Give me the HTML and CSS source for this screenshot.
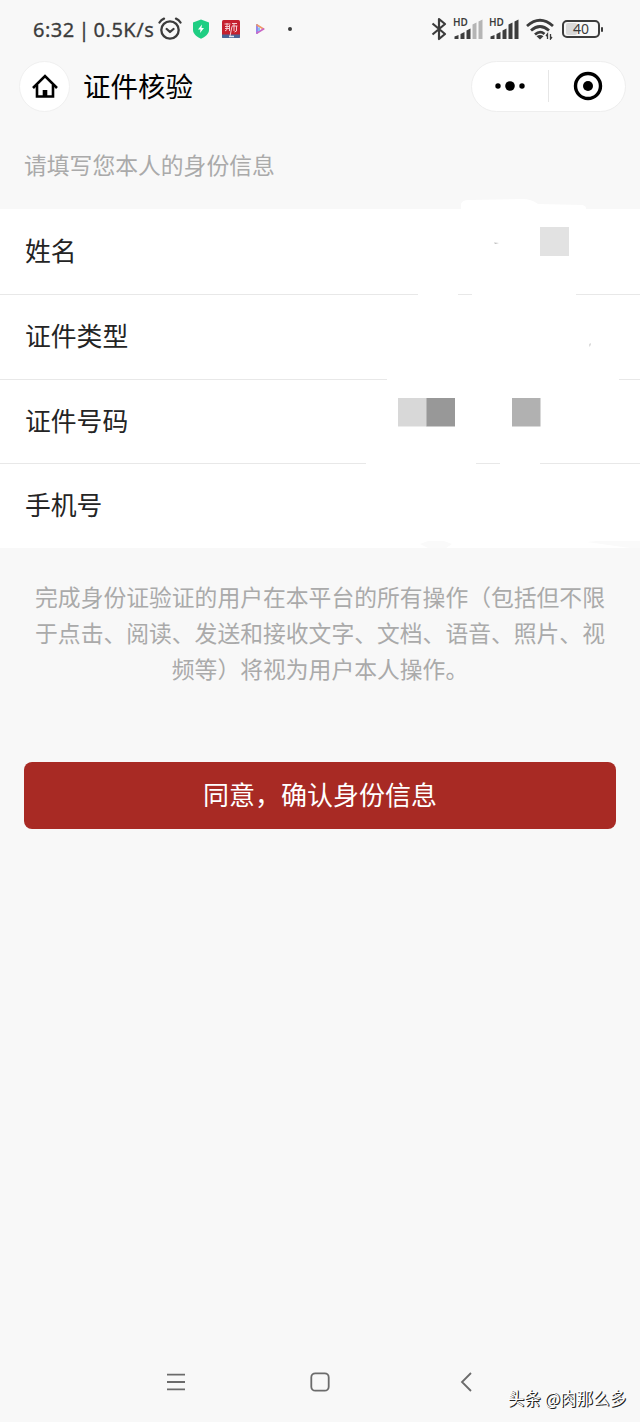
FILE: index.html
```html
<!DOCTYPE html>
<html lang="zh-CN">
<head>
    <meta charset="UTF-8">
    <meta name="viewport" content="width=device-width, initial-scale=1.0">
    <title>证件核验</title>
    <link rel="stylesheet" href="styles.css">
</head>
<body>
    <div class="page">
        <div class="status-bar">
            <span class="status-time">6:32 | 0.5K/s</span>
            <svg class="icon-alarm" viewBox="0 0 24 24" width="24" height="24" fill="none" stroke="#3c3c3c" stroke-width="2.3" stroke-linecap="round" stroke-linejoin="round">
                <circle cx="12" cy="13" r="8.7"/>
                <path d="M8.7 12l3.3 3 3.5-3M1.5 5.5Q3.2 2.7 6 1.7M22.5 5.5Q20.8 2.7 18 1.7"/>
            </svg>
            <svg class="icon-shield" viewBox="0 0 18 20" width="18" height="20">
                <path d="M9 .5L17 3.5V11c0 4-4 7-8 8.700C5 18 1 15 1 11V3.500z" fill="#1fce83"/>
                <path d="M10 5.500L6 10.500h2.500L8 14l4-5H9.500z" fill="#fff"/>
            </svg>
            <svg class="icon-app" viewBox="0 0 18 18" width="18" height="18">
                <rect width="18" height="18" rx="1.500" fill="#c5202e"/>
                <path d="M0 14.500h18V17q0 1-1 1H1q-1 0-1-1z" fill="#4a6495"/>
                <path d="M2.500 4h6M10 3.500h5M3 6.500h5M5 3v6.500L3 11M7.500 5v6M10 6h5.500M12 3v8M14.500 6v5l-2 1M3 8.500h5M8 16.300l2-10" fill="none" stroke="#f5cbd0" stroke-width="1"/>
                <path d="M7 16.500h5" stroke="#dce2ed" stroke-width="1.500"/>
            </svg>
            <svg class="icon-play" viewBox="0 0 12 12" width="12" height="12" fill="none" stroke-width="1.800" stroke-linecap="round">
                <path d="M3 2v8" stroke="#8a7bea"/>
                <path d="M3 2l6.500 4" stroke="#f09a68"/>
                <path d="M3 10l6.500-4" stroke="#c968c6"/>
                <path d="M5 5v2.500" stroke="#63b2f2" stroke-width="1.500"/>
            </svg>
            <span class="status-dot"></span>
            <div class="status-right">
                <svg class="icon-bluetooth" viewBox="0 0 16 24" width="16" height="24" fill="none" stroke="#3c3c3c" stroke-width="2.200" stroke-linejoin="round">
                    <path d="M1.500 6.500L14 17 8 22V2l6 5L1.500 17.500"/>
                </svg>
                <svg class="icon-signal" viewBox="0 0 30 22" width="30" height="22">
                    <text x="0" y="8" class="signal-hd">HD</text>
                    <path d="M1.500 21v-2.500l4-1.500v4zM7.500 21v-5l4-2v7zM13.500 21v-8.500l4-2V21z" fill="#3c3c3c"/>
                    <path d="M19.500 21V6.500l4-2V21zM25.500 21V3.500l4-2V21z" fill="#b5b5b5"/>
                </svg>
                <svg class="icon-signal" viewBox="0 0 30 22" width="30" height="22">
                    <text x="0" y="8" class="signal-hd">HD</text>
                    <path d="M1.500 21v-2.500l4-1.500v4zM7.500 21v-5l4-2v7zM13.500 21v-8.500l4-2V21zM19.500 21V6.500l4-2V21zM25.500 21V3.500l4-2V21z" fill="#3c3c3c"/>
                </svg>
                <svg class="icon-wifi" viewBox="0 0 28 22" width="28" height="22" fill="none" stroke="#3c3c3c" stroke-width="2.800">
                    <path d="M1 8Q14-3.500 27 8M5 12.500Q14 4.500 23 12.500M9 16.500Q14 12 18.500 16"/>
                    <path d="M10.500 18.300q3.500-2.500 7 0L14 21.500z" fill="#3c3c3c" stroke="none"/>
                    <path d="M21.500 21v-5l-1.500 2M24.500 16v5l1.500-2" stroke-width="1.300"/>
                </svg>
                <div class="battery"><span class="battery-level"></span><span class="battery-text">40</span></div>
                <span class="battery-tip"></span>
            </div>
        </div>

        <div class="nav-bar">
            <div class="home-button">
                <svg viewBox="0 0 26 24" width="26" height="24" fill="none" stroke="#000" stroke-width="2.600">
                    <path d="M1 14L13 2l12 12" stroke-linejoin="miter"/>
                    <path d="M5 11v11.500h16V11"/>
                    <path d="M10.700 16h4.600v6h-4.600z" fill="#000" stroke="none"/>
                </svg>
            </div>
            <h1>证件核验</h1>
            <div class="capsule">
                <svg class="capsule-more" viewBox="0 0 30 12" width="30" height="12">
                    <circle cx="3" cy="6" r="2.700"/>
                    <circle cx="15" cy="6" r="4.800"/>
                    <circle cx="27" cy="6" r="2.700"/>
                </svg>
                <span class="capsule-line"></span>
                <svg class="capsule-close" viewBox="0 0 30 30" width="30" height="30">
                    <circle cx="15" cy="15" r="12.500" fill="none" stroke="#000" stroke-width="3.400"/>
                    <circle cx="15" cy="15" r="5"/>
                </svg>
            </div>
        </div>

        <p class="hint">请填写您本人的身份信息</p>

        <div class="form">
            <div class="row">姓名</div>
            <div class="row">证件类型</div>
            <div class="row">证件号码</div>
            <div class="row">手机号</div>
            <!-- masked personal data -->
            <svg class="mask" viewBox="0 0 640 360" width="640" height="360">
                <path d="M461 20v-6q1-4 8-4l54-1q8 0 15 5l44 1q5 1 4 5zM418 100h40v8h-40zM472 100h104v8H472zM387 185h232v8H387zM366 269h110v8H366zM500 269h40v8h-40z" fill="#fff"/>
                <path d="M420 354l8-3h16l8 3-6 4h-18zM587 352l10-1h43v7h-10z" fill="#fafafa"/>
                <path d="M494 52.500l5 .5-4 1z" fill="#bbb"/>
                <path d="M589 154l2-1v2l-2 2z" fill="#ddd"/>
                <path d="M540 37h29v29h-29z" fill="#e2e2e2"/>
                <path d="M398 208h29v28.500h-29z" fill="#d8d8d8"/>
                <path d="M426.500 208H455v28.500h-28.500z" fill="#989898"/>
                <path d="M512 208h28.500v28.500H512z" fill="#b1b1b1"/>
            </svg>
        </div>

        <p class="note">完成身份证验证的用户在本平台的所有操作（包括但不限<br>于点击、阅读、发送和接收文字、文档、语音、照片、视<br>频等）将视为用户本人操作。</p>

        <button class="confirm-button" type="button">同意，确认身份信息</button>

        <div class="system-nav">
            <svg viewBox="0 0 20 20" width="20" height="20" fill="none" stroke="#6b6b6b" stroke-width="1.800">
                <path d="M1 2.700h18M1 10h18M1 17.300h18"/>
            </svg>
            <svg class="nav-home" viewBox="0 0 20 20" width="20" height="20" fill="none" stroke="#6b6b6b" stroke-width="1.800">
                <rect x="1.300" y="1.300" width="17.400" height="17.400" rx="4"/>
            </svg>
            <svg class="nav-back" viewBox="0 0 12 20" width="12" height="20" fill="none" stroke="#6b6b6b" stroke-width="1.800">
                <path d="M11 1L2 10l9 9"/>
            </svg>
        </div>
        <div class="watermark">头条 @肉那么多</div>
    </div>
</body>
</html>
```

FILE: styles.css
```css
body {
    margin: 0;
    background: #f8f8f8;
    font-family: "Noto Sans CJK SC", sans-serif;
    color: #242424;
}

.page {
    position: relative;
    display: flex;
    flex-direction: column;
    width: 640px;
    height: 1422px;
    overflow: hidden;
}

/* status bar */
.status-bar {
    display: flex;
    align-items: center;
    height: 58px;
    padding-left: 33px;
    box-sizing: border-box;
    color: #3c3c3c;
}

.status-time {
    width: 125px;
    font-family: "Noto Sans", sans-serif;
    font-size: 20px;
    letter-spacing: 0.5px;
    word-spacing: -2px;
    white-space: nowrap;
    -webkit-text-stroke: 0.3px #3c3c3c;
}

.icon-shield {
    margin-left: 10px;
}

.icon-app {
    margin-left: 12px;
}

.icon-play {
    margin-left: 14px;
}

.status-dot {
    width: 4px;
    height: 4px;
    margin-left: 22px;
    border-radius: 50%;
    background: #3c3c3c;
}

.status-right {
    display: flex;
    align-items: center;
    margin-left: auto;
    padding-right: 37px;
}

.icon-bluetooth {
    margin-right: 7px;
}

.icon-signal {
    position: relative;
    left: -1px;
    margin-right: 6px;
    overflow: visible;
}

.signal-hd {
    font-family: "Noto Sans", sans-serif;
    font-size: 10px;
    font-weight: 600;
    fill: #3c3c3c;
}

.icon-wifi {
    margin-right: 8px;
}

.battery {
    position: relative;
    display: flex;
    align-items: center;
    justify-content: center;
    width: 38px;
    height: 18px;
    box-sizing: border-box;
    border: 2px solid #3c3c3c;
    border-radius: 5px;
}

.battery-level {
    position: absolute;
    left: 2px;
    top: 1px;
    bottom: 1px;
    width: 11px;
    border-radius: 2px;
    background: #d9d9d9;
}

.battery-text {
    position: relative;
    font-family: "Noto Sans", sans-serif;
    font-size: 14px;
    line-height: 14px;
}

.battery-tip {
    width: 2px;
    height: 5px;
    margin-left: 1px;
    border-radius: 1px;
    background: #3c3c3c;
}

/* mini program bar */
.nav-bar {
    display: flex;
    align-items: center;
    height: 56px;
    padding: 0 14px 0 19px;
}

.home-button {
    display: flex;
    align-items: center;
    justify-content: center;
    width: 49px;
    height: 49px;
    border: 1px solid #f0f0f0;
    border-radius: 50%;
    background: #fff;
}

h1 {
    margin: 0 0 2px 13px;
    font-size: 27.5px;
    font-weight: 400;
    line-height: 40px;
    color: #000;
}

.capsule {
    display: flex;
    align-items: center;
    width: 153px;
    height: 49px;
    margin-left: auto;
    border: 1px solid #eee;
    border-radius: 26px;
    background: #fff;
}

.capsule-more {
    margin-left: 23px;
}

.capsule-line {
    width: 1px;
    height: 32px;
    margin-left: 23px;
    background: #e6e6e6;
}

.capsule-close {
    margin-left: 24px;
}

/* identity form */
.hint {
    height: 95px;
    margin: 0;
    padding-left: 24px;
    font-size: 22.8px;
    line-height: 102px;
    color: #aaa;
}

.form {
    position: relative;
    height: 339px;
    display: grid;
    grid-template-rows: 86px 85px 84px 84px;
    background: #fff;
}

.row {
    display: flex;
    align-items: center;
    padding: 0 0 5px 25px;
    border-bottom: 1px solid #e8e8e8;
    font-size: 25.8px;
}

.row:nth-child(4) {
    border-bottom: none;
}

.mask {
    position: absolute;
    left: 0;
    top: -19px;
}

.note {
    margin: 31px 0 0;
    font-size: 22.8px;
    line-height: 36px;
    color: #aaa;
    text-align: center;
    white-space: nowrap;
}

.confirm-button {
    height: 67px;
    margin: 75px 24px 0;
    padding: 0 0 4px;
    border: none;
    border-radius: 8px;
    background: #a82a24;
    color: #fff;
    font-family: inherit;
    font-size: 26px;
}

/* android navigation */
.system-nav {
    display: flex;
    align-items: center;
    height: 20px;
    margin: auto 0 30px 166px;
}

.nav-home {
    margin-left: 124px;
}

.nav-back {
    margin-left: 130px;
}

.watermark {
    position: absolute;
    right: 14px;
    bottom: 12px;
    font-size: 16.5px;
    line-height: 24px;
    color: #fff;
    text-shadow: 1px 1px 0 #222, 1px 0 0 #444;
}
```
